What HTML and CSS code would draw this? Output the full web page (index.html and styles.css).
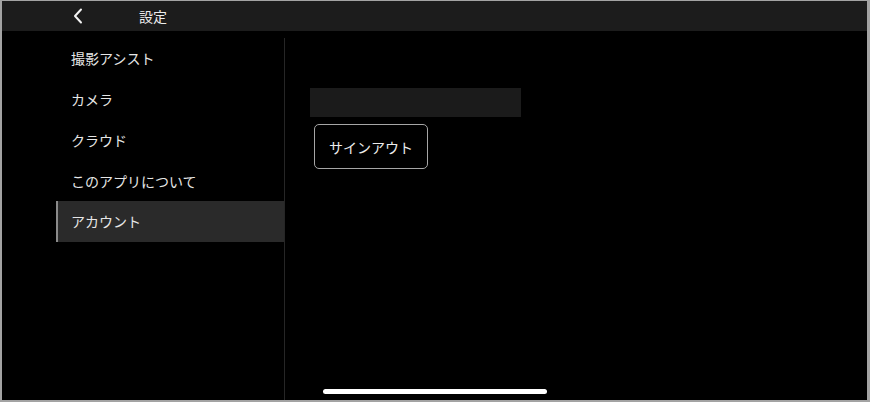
FILE: index.html
```html
<!DOCTYPE html>
<html lang="ja">
<head>
    <meta charset="UTF-8">
    <meta name="viewport" content="width=device-width, initial-scale=1.0">
    <title>設定</title>
    <link rel="stylesheet" href="styles.css">
</head>
<body>
    <div class="screen">
        <!-- Шапка -->
        <header class="top-bar">
            <svg class="back" width="10" height="16" viewBox="0 0 10 16">
                <path d="M8 1.5 L2 8 L8 14.5" fill="none" stroke="#f2f2f2" stroke-width="2" stroke-linecap="round" stroke-linejoin="round"/>
            </svg>
            <span class="title">設定</span>
        </header>

        <div class="content">
            <!-- Меню слева -->
            <nav class="side-menu">
                <a class="menu-item" href="#">撮影アシスト</a>
                <a class="menu-item" href="#">カメラ</a>
                <a class="menu-item" href="#">クラウド</a>
                <a class="menu-item" href="#">このアプリについて</a>
                <a class="menu-item active" href="#">アカウント</a>
            </nav>

            <!-- Аккаунт -->
            <main class="account">
                <div class="account-name"></div>
                <button class="sign-out">サインアウト</button>
            </main>
        </div>

        <div class="home-indicator"></div>
    </div>
</body>
</html>
```

FILE: styles.css
```css
/* Основные стили */
html, body {
    margin: 0;
    height: 100%;
}

body {
    background: #a3a3a3;
    padding: 1px 3px 2px 2px;
    box-sizing: border-box;
    font-family: "Noto Sans CJK JP", "Noto Sans", sans-serif;
    color: #e6e6e6;
}

.screen {
    position: relative;
    height: 100%;
    background: #000;
    display: flex;
    flex-direction: column;
    overflow: hidden;
}

/* Шапка */
.top-bar {
    height: 30px;
    flex-shrink: 0;
    background: #1c1c1c;
    display: flex;
    align-items: center;
    padding-left: 71px;
}

.top-bar .back {
    display: block;
}

.top-bar .title {
    margin-left: 56px;
    font-size: 14px;
    color: #ececec;
}

.content {
    flex: 1;
    display: flex;
    padding-top: 7px;
}

/* Меню слева */
.side-menu {
    width: 283px;
    border-right: 1px solid #262626;
    display: flex;
    flex-direction: column;
    padding-left: 54px;
    box-sizing: border-box;
}

.menu-item {
    height: 40.75px;
    display: flex;
    align-items: center;
    padding-left: 13px;
    font-size: 14px;
    color: #e6e6e6;
    text-decoration: none;
    border-left: 2px solid transparent;
}

.menu-item.active {
    background: #2a2a2a;
    border-left-color: #8a8a8a;
}

/* Аккаунт */
.account {
    flex: 1;
    padding: 50px 0 0 25px;
    display: flex;
    flex-direction: column;
    align-items: flex-start;
}

.account-name {
    width: 211px;
    height: 29px;
    background: #1b1b1b;
}

.sign-out {
    margin: 7px 0 0 4px;
    width: 114px;
    height: 45px;
    background: #000;
    border: 1px solid #a6a6a6;
    border-radius: 5px;
    color: #ececec;
    font-family: inherit;
    font-size: 14px;
    padding: 0;
}

.home-indicator {
    position: absolute;
    left: 321px;
    bottom: 6px;
    width: 224px;
    height: 5px;
    border-radius: 3px;
    background: #fff;
}
```
